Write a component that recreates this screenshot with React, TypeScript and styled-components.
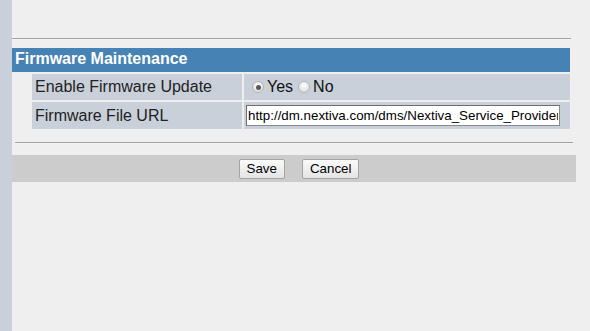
import React from "react";
import styled, { createGlobalStyle } from "styled-components";

const GlobalStyle = createGlobalStyle`
  html, body {
    margin: 0;
    padding: 0;
    background: #efefef;
    font-family: "Liberation Sans", Arial, sans-serif;
  }
`;

const Page = styled.div`
  display: flex;
  min-height: 100vh;
`;

const Sidebar = styled.div`
  width: 12px;
  flex-shrink: 0;
  background: #c9d0da;
`;

const Main = styled.div`
  flex: 1;
  display: flex;
  flex-direction: column;
  padding-top: 38px;
`;

const Rule = styled.div<{ $width: number; $indent: number; $gap: number }>`
  width: ${(p) => p.$width}px;
  margin-left: ${(p) => p.$indent}px;
  margin-bottom: ${(p) => p.$gap}px;
  height: 1px;
  background: #a2a2a2;
  border-bottom: 1px solid #f4f4f4;
`;

const SectionHeader = styled.div`
  width: 558px;
  height: 24px;
  box-sizing: border-box;
  background: #4682b4;
  color: #ffffff;
  font-weight: bold;
  font-size: 16px;
  line-height: 21px;
  padding-left: 3px;
`;

const SettingsTable = styled.div`
  display: grid;
  grid-template-columns: 210px 326px;
  gap: 2px;
  margin: 2px 0 13px 20px;
`;

const LabelCell = styled.div<{ $height: number }>`
  height: ${(p) => p.$height}px;
  background: #c9d0da;
  color: #222;
  font-size: 16px;
  display: flex;
  align-items: center;
  padding-left: 3px;
`;

const ValueCell = styled.div<{ $height: number; $pad: number }>`
  height: ${(p) => p.$height}px;
  background: #c9d0da;
  color: #111;
  font-size: 16px;
  display: flex;
  align-items: center;
  padding-left: ${(p) => p.$pad}px;
`;

const RadioLabel = styled.label`
  display: inline-flex;
  align-items: center;
  margin-right: 5px;
  cursor: default;
`;

const Radio = styled.input`
  appearance: none;
  -webkit-appearance: none;
  width: 12px;
  height: 12px;
  margin: 0 3px 0 0;
  border-radius: 50%;
  border: 1px solid #b4b4b4;
  background: radial-gradient(circle at 50% 35%, #ffffff 0%, #e6e6e6 60%, #d4d4d4 100%);
  box-sizing: border-box;
  position: relative;
  &:checked::after {
    content: "";
    position: absolute;
    left: 2.5px;
    top: 2.5px;
    width: 5px;
    height: 5px;
    border-radius: 50%;
    background: #5a5a5a;
  }
`;

const UrlInput = styled.input`
  width: 314px;
  height: 21px;
  box-sizing: border-box;
  border: 1px solid #8a8a8a;
  border-top-color: #6e6e6e;
  border-left-color: #6e6e6e;
  background: #ffffff;
  color: #000;
  font-family: "Liberation Sans", Arial, sans-serif;
  font-size: 13.33px;
  padding: 0 1px;
  margin: 0;
  outline: none;
`;

const ButtonBar = styled.div`
  width: 564px;
  height: 27px;
  background: #cccccc;
  display: flex;
  align-items: center;
  justify-content: center;
  gap: 17px;
  padding-left: 10px;
  box-sizing: border-box;
`;

const Button = styled.button`
  height: 20px;
  padding: 0 7px;
  font-family: "Liberation Sans", Arial, sans-serif;
  font-size: 13.33px;
  color: #000;
  background: linear-gradient(#fafafa, #e4e4e4);
  border: 1px solid #a4a4a4;
  border-radius: 2px;
  margin: 0;
`;

export default function App() {
  return (
    <>
      <GlobalStyle />
      <Page>
        <Sidebar />
        <Main>
          <Rule $width={559} $indent={0} $gap={8} />
          <SectionHeader>Firmware Maintenance</SectionHeader>
          <SettingsTable>
            <LabelCell $height={26}>Enable Firmware Update</LabelCell>
            <ValueCell $height={26} $pad={8}>
              <RadioLabel>
                <Radio type="radio" name="fw" defaultChecked />
                Yes
              </RadioLabel>
              <RadioLabel>
                <Radio type="radio" name="fw" />
                No
              </RadioLabel>
            </ValueCell>
            <LabelCell $height={27}>Firmware File URL</LabelCell>
            <ValueCell $height={27} $pad={2}>
              <UrlInput
                type="text"
                readOnly
                defaultValue="http://dm.nextiva.com/dms/Nextiva_Service_Provider/"
              />
            </ValueCell>
          </SettingsTable>
          <Rule $width={558} $indent={3} $gap={11} />
          <ButtonBar>
            <Button>Save</Button>
            <Button>Cancel</Button>
          </ButtonBar>
        </Main>
      </Page>
    </>
  );
}
